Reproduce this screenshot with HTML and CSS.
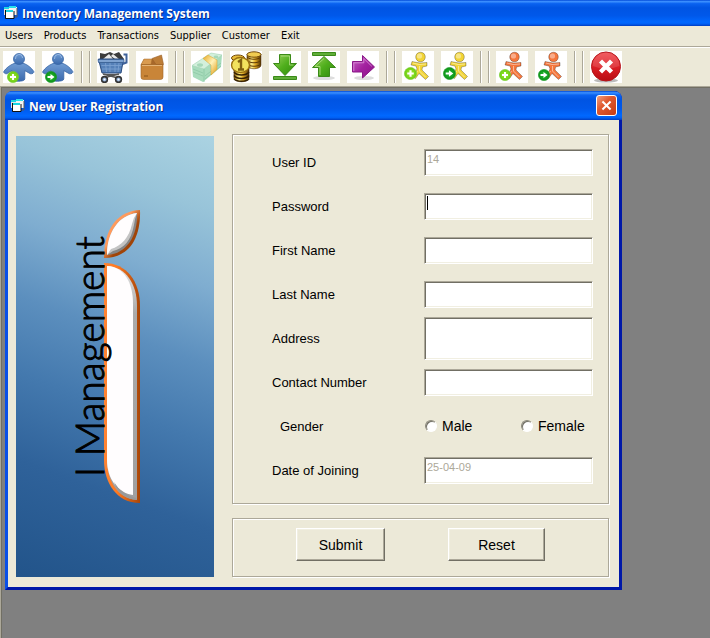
FILE: index.html
```html
<!DOCTYPE html>
<html lang="en">
<head>
<meta charset="utf-8">
<title>Inventory Management System</title>
<link rel="stylesheet" href="styles.css">
</head>
<body>
<svg class="defs" aria-hidden="true">
  <defs>
    <linearGradient id="g-blue" x1="0" y1="0" x2="0" y2="1"><stop offset="0" stop-color="#6f9bd2"/><stop offset="1" stop-color="#3a69ad"/></linearGradient>
    <linearGradient id="g-green" x1="0" y1="0" x2="1" y2="1"><stop offset="0" stop-color="#9ad25c"/><stop offset=".5" stop-color="#4fae1c"/><stop offset="1" stop-color="#2f8a0c"/></linearGradient>
    <linearGradient id="g-purple" x1="0" y1="0" x2="1" y2="1"><stop offset="0" stop-color="#c868c4"/><stop offset=".5" stop-color="#a3219f"/><stop offset="1" stop-color="#8a1088"/></linearGradient>
    <linearGradient id="g-gold" x1="0" y1="0" x2="1" y2="0"><stop offset="0" stop-color="#8a5a08"/><stop offset=".35" stop-color="#fff08a"/><stop offset=".6" stop-color="#e0a820"/><stop offset="1" stop-color="#4a2c04"/></linearGradient>
    <linearGradient id="g-red" x1="0" y1="0" x2="0" y2="1"><stop offset="0" stop-color="#f0454a"/><stop offset=".5" stop-color="#dc1f26"/><stop offset="1" stop-color="#b80c12"/></linearGradient>
    <linearGradient id="g-band" x1="0" y1="0" x2="1" y2="1"><stop offset="0" stop-color="#e8a820"/><stop offset=".5" stop-color="#fff2b8"/><stop offset="1" stop-color="#e09a10"/></linearGradient>
    <radialGradient id="g-lime"><stop offset="0" stop-color="#a8ec30"/><stop offset="1" stop-color="#68cc14"/></radialGradient>
    <radialGradient id="g-go"><stop offset="0" stop-color="#28c034"/><stop offset="1" stop-color="#0c9018"/></radialGradient>
    <symbol id="app" viewBox="0 0 16 16">
      <path d="M1 3h8v7H1z" fill="#e4e4e4"/><path d="M1 2h8v2H1z" fill="#20d4e4"/>
      <path d="M6 2h8v8H6z" fill="#f4f4f4"/><path d="M6 1h7v2H6z" fill="#28e0ec"/><path d="M14 3v9h-3" fill="none" stroke="#5a5a5a"/>
      <path d="M3 6h8v7H3z" fill="#fff"/><path d="M3 5h7v2H3z" fill="#18d4e4"/><path d="M2.500 5v8.500h8.500V6" fill="none" stroke="#111"/>
    </symbol>
    <symbol id="plus" viewBox="0 0 12 12"><circle cx="6" cy="6" r="5.600" fill="url(#g-lime)" stroke="#79cf2e" stroke-width=".6"/><path d="M6 3v6M3 6h6" stroke="#fff" stroke-width="2"/></symbol>
    <symbol id="go" viewBox="0 0 12 12"><circle cx="6" cy="6" r="5.600" fill="url(#g-go)" stroke="#1a9c24" stroke-width=".6"/><path d="M2.500 5h3V3L9.500 6 5.500 9V7h-3z" fill="#fff"/></symbol>
    <symbol id="person" viewBox="0 0 32 32">
      <path d="M11 12.500C7 14 3 17 .8 20.500c-.5 1.500 1.500 2.500 3 2.200l5-3V28c0 3 13 3 13 0v-8.300l5.500 3c2 .4 4-.8 3.500-2.200C28.500 17 25 14 21 12.500z" fill="url(#g-blue)" stroke="#3766a6" stroke-width=".8"/>
      <circle cx="16" cy="8" r="5.500" fill="url(#g-blue)" stroke="#3766a6" stroke-width=".8"/>
      <path d="M12.500 8a3.500 4 0 0 1 7-1" fill="none" stroke="#a5c3e8" stroke-width=".8"/>
    </symbol>
    <symbol id="runner" viewBox="0 0 32 32">
      <path d="M10 10.500l8 1.500 7-.5v3.500l-4.500 1-.5 3 6.500 6.500-3 3-6.500-6-3.500 5-2.500-1.500 4-8-1-3-5-1z" fill="currentColor" stroke="#0004" stroke-linejoin="round"/>
      <path d="M11 12l6 1.500 7-.500M17.500 15v5l6 6M15.500 20l-3 5" fill="none" stroke="#fff7"/>
      <circle cx="18.500" cy="6" r="4.800" fill="currentColor" stroke="#0004"/>
      <circle cx="17.500" cy="5" r="2.600" fill="#fff6"/>
    </symbol>
  </defs>
</svg>

<header class="titlebar">
  <svg class="appicon"><use href="#app"/></svg>
  <h1 class="caption">Inventory Management System</h1>
</header>

<nav class="menu">
  <a href="#users">Users</a>
  <a href="#products">Products</a>
  <a href="#transactions">Transactions</a>
  <a href="#supplier">Supplier</a>
  <a href="#customer">Customer</a>
  <a href="#exit">Exit</a>
</nav>

<div class="toolbar" role="toolbar">
  <button class="tool" type="button" aria-label="Add user"><svg viewBox="0 0 32 32"><use href="#person"/><use href="#plus" x="4" y="20" width="12" height="12"/></svg></button>
  <button class="tool" type="button" aria-label="Go to users"><svg viewBox="0 0 32 32"><use href="#person"/><use href="#go" x="3" y="20" width="12" height="12"/></svg></button>
  <span class="divider"></span>
  <button class="tool" type="button" aria-label="Products"><svg viewBox="0 0 32 32">
    <path d="M3 8V2l5 1 5-2 4 2 5-2 5 7z" fill="#3c3c3c"/><path d="M6 8l6-5 4 5zM16 3l6 5h-4l-4-3z" fill="#e8e8e8"/>
    <path d="M1.500 8h25l-2.500 14H5z" fill="#5580b8" stroke="#27497c" stroke-linejoin="round"/><path d="M1 8.500h26v3H1.500z" fill="#7ea2d0" stroke="#2f5488" stroke-width=".7"/>
    <path d="M4.500 14.500h20M5 18h18.500M8.500 12l1 9M13 12v9M18 12v9M22 12l-1 9" stroke="#7fa3d2" stroke-width=".8"/>
    <path d="M25.500 13l4-1.500V3.500h-3" fill="none" stroke="#3f629a" stroke-width="2"/>
    <path d="M6 23l15 4M22 23L8 26.500M9 24h12" stroke="#555" stroke-width="1.800"/>
    <circle cx="7.500" cy="28.500" r="2.900" fill="#89a9d3" stroke="#333" stroke-width="1.600"/><circle cx="21.500" cy="28.500" r="2.900" fill="#89a9d3" stroke="#333" stroke-width="1.600"/><circle cx="7.500" cy="28.500" r="1" fill="#fff"/><circle cx="21.500" cy="28.500" r="1" fill="#fff"/>
  </svg></button>
  <button class="tool" type="button" aria-label="Stock"><svg viewBox="0 0 32 32">
    <path d="M8 8h10l8 1 1 5H5z" fill="#a8682a"/>
    <path d="M5 13.500L8 8h8l-1 5.500z" fill="#d99b50" stroke="#a56a28" stroke-width=".5"/>
    <path d="M5 13.500h22V26q0 2.500-2.500 2.500h-17Q5 28.500 5 26z" fill="#c98538" stroke="#a0662a" stroke-width=".6"/>
    <path d="M16 7.500L25.500 4 27.500 13.500H20z" fill="#bd7d36" stroke="#9a6026" stroke-width=".6"/>
    <path d="M6 14.500h20" stroke="#e6b577"/><path d="M8 25h4" stroke="#9b6222" stroke-width="1.400"/>
  </svg></button>
  <span class="divider"></span>
  <button class="tool" type="button" aria-label="Cash"><svg viewBox="0 0 32 32">
    <path d="M1 15L20 3l11 1-1 12-18 15L2 26z" fill="#a8dcbc"/><path d="M1 14.500L20 2l11 2-18 14z" fill="#d3f0dc" stroke="#a5d3b5" stroke-width=".6"/><path d="M13 18v13M2 18l10 4M2 21l10 4M14 25l16-13M14 28l16-13" stroke="#8cc8a4" stroke-width=".8"/>
    <ellipse cx="9" cy="14" rx="3" ry="1.800" fill="#a6d8b8"/><ellipse cx="25" cy="6" rx="2.400" ry="1.400" fill="#a6d8b8"/>
    <path d="M12 7.500l5-3.500L26 9v9.500L20 24V14z" fill="url(#g-band)" stroke="#d8a22c" stroke-width=".5"/>
  </svg></button>
  <button class="tool" type="button" aria-label="Coins"><svg viewBox="0 0 32 32">
    <path d="M17 3v11c0 5 14 5 14 0V3z" fill="url(#g-gold)" stroke="#553505" stroke-width=".6"/><path d="M17 6c3 3 11 3 14 0M17 9.500c3 3 11 3 14 0M17 13c3 3 11 3 14 0" fill="none" stroke="#5e3b06"/><ellipse cx="24" cy="3.500" rx="7" ry="2.700" fill="#f0cc50" stroke="#70480a"/>
    <ellipse cx="8" cy="7" rx="6.500" ry="3" fill="#e8bd3a" stroke="#70480a"/>
    <path d="M4 16v11c0 5 15 5 15 0V16z" fill="url(#g-gold)" stroke="#3d2402" stroke-width=".6"/><path d="M4 21c3 4 12 4 15 0M4 24.500c3 4 12 4 15 0M4 28c3 3 12 3 15 0" fill="none" stroke="#352002" stroke-width="1.400"/>
    <ellipse cx="10.500" cy="14" rx="9" ry="7.500" fill="#f2e25e" stroke="#9a7010" stroke-width="1.400"/><path d="M8 11l3-2v9M8 18.500h6" fill="none" stroke="#806010" stroke-width="2.400"/>
  </svg></button>
  <button class="tool" type="button" aria-label="Receive"><svg viewBox="0 0 32 32"><path d="M10.500 3.500h11v9h6L16 24.500 4.500 12.500h6z" fill="url(#g-green)" stroke="#3b8a18"/><path d="M12 5h8.500v9h4" fill="none" stroke="#b4e088" stroke-width=".8"/><path d="M4.500 25.500h23v3h-23z" fill="#5fae38" stroke="#3b8a18"/></svg></button>
  <button class="tool" type="button" aria-label="Send"><svg viewBox="0 0 32 32"><ellipse cx="16" cy="27" rx="11" ry="2" fill="#ddd"/><path d="M4.500 1.500h23v3h-23z" fill="#5fae38" stroke="#3b8a18"/><path d="M16 5.500L27.500 16.500h-6v9h-11v-9h-6z" fill="url(#g-green)" stroke="#3b8a18"/><path d="M16 7.500l-9 8h5v8.500" fill="none" stroke="#b4e088" stroke-width=".8"/></svg></button>
  <button class="tool" type="button" aria-label="Next"><svg viewBox="0 0 32 32"><ellipse cx="17" cy="27" rx="10" ry="2" fill="#ddd"/><path d="M5.500 10.500h10V4.500L27.500 16 15.500 27v-6h-10z" fill="url(#g-purple)" stroke="#8a1888"/><path d="M6.800 20v-8.200h10V7.500l8 7.800" fill="none" stroke="#dc94da" stroke-width=".8"/></svg></button>
  <span class="divider"></span>
  <button class="tool yellow" type="button" aria-label="Add supplier"><svg viewBox="0 0 32 32"><use href="#runner"/><use href="#plus" x="2" y="16" width="13" height="13"/></svg></button>
  <button class="tool yellow" type="button" aria-label="Go to suppliers"><svg viewBox="0 0 32 32"><use href="#runner"/><use href="#go" x="2" y="16" width="13" height="13"/></svg></button>
  <span class="divider"></span>
  <button class="tool orange" type="button" aria-label="Add customer"><svg viewBox="0 0 32 32"><use href="#runner"/><use href="#plus" x="3" y="18" width="12" height="12"/></svg></button>
  <button class="tool orange" type="button" aria-label="Go to customers"><svg viewBox="0 0 32 32"><use href="#runner"/><use href="#go" x="3" y="18" width="12" height="12"/></svg></button>
  <span class="divider"></span>
  <button class="tool" type="button" aria-label="Exit"><svg viewBox="0 0 32 32"><ellipse cx="16" cy="29.500" rx="12" ry="2" fill="#bbb"/><circle cx="16" cy="15.500" r="14.500" fill="url(#g-red)" stroke="#b5161b"/><path d="M2.500 15a13.500 13.500 0 0 1 27 0q-13 5-27 0z" fill="#fff2"/><path d="M10.500 10l11 11M21.500 10l-11 11" stroke="#fff" stroke-width="4.400"/></svg></button>
</div>

<main class="desktop">
  <section class="window" aria-labelledby="reg-title">
    <div class="window-bar">
      <svg class="appicon"><use href="#app"/></svg>
      <h2 class="caption" id="reg-title">New User Registration</h2>
      <button class="close" type="button" aria-label="Close"><svg viewBox="0 0 21 21"><path d="M6 6l9 9M15 6l-9 9" stroke="#fff" stroke-width="2.200"/></svg></button>
    </div>
    <form class="window-body">
      <svg class="banner" viewBox="0 0 198 441">
        <defs>
          <linearGradient id="b-edge" x1="0" y1="0" x2="1" y2="0"><stop offset="0" stop-color="#ff8434"/><stop offset=".35" stop-color="#ff7a22"/><stop offset="1" stop-color="#a84608"/></linearGradient>
          <linearGradient id="b-leaf" x1="0" y1="0" x2="1" y2="1"><stop offset=".4" stop-color="#ff9a5c"/><stop offset=".6" stop-color="#a04408"/></linearGradient>
          <linearGradient id="b-shade" x1="0" y1="0" x2="0" y2="1"><stop offset="0" stop-color="#e4e4e4"/><stop offset=".2" stop-color="#ababab"/><stop offset="1" stop-color="#a0a0a0"/></linearGradient>
        </defs>
        <path d="M88 122C88 92 102 75 124 74C125 101 114 122 88 122z" fill="url(#b-leaf)"/>
        <path d="M91 119C91 96 103 79 121 77C122 99 111 118 91 119z" fill="#858585"/>
        <path d="M91 119C91 96 103 79 121 77Q119 82 118 89C115 105 108 112 97 115z" fill="#c4c4c4"/>
        <path d="M91 119C91 96 103 79 121 77Q117 82 116 88C113 102 105 110 95 113z" fill="#fffdfe"/>
        <path d="M88 127C111 127 124 146 124 170V367C100 367 88 346 88 324z" fill="url(#b-edge)"/>
        <path d="M91 130C110 131 121 148 121 170V364C102 363 91 345 91 324z" fill="url(#b-shade)"/>
        <path d="M91 130C108 131 117 146 117 168V359C102 357 91 343 91 324z" fill="#fffdfe"/>
        <path d="M98 346Q105 358 120 362L121 364Q104 363 98 346z" fill="#999"/>
        <text class="banner-text" transform="translate(88 341) rotate(-90)">I Management</text>
      </svg>
      <div class="panels">
        <div class="panel fields">
          <div class="row"><label for="uid">User ID</label><input class="box" id="uid" type="text" value="14" disabled></div>
          <div class="row"><label for="pwd">Password</label><input class="box current" id="pwd" type="password"></div>
          <div class="row"><label for="first">First Name</label><input class="box" id="first" type="text"></div>
          <div class="row"><label for="last">Last Name</label><input class="box" id="last" type="text"></div>
          <div class="row"><label for="addr">Address</label><textarea class="box tall" id="addr"></textarea></div>
          <div class="row"><label for="phone">Contact Number</label><input class="box" id="phone" type="text"></div>
          <div class="row" role="radiogroup" aria-labelledby="gender"><span class="indent" id="gender">Gender</span>
            <div class="options">
              <label class="option"><input class="radio" type="radio" name="gender">Male</label>
              <label class="option"><input class="radio" type="radio" name="gender">Female</label>
            </div>
          </div>
          <div class="row"><label for="doj">Date of Joining</label><input class="box" id="doj" type="text" value="25-04-09" disabled></div>
        </div>
        <div class="panel actions">
          <button class="push" type="submit">Submit</button>
          <button class="push wide" type="reset">Reset</button>
        </div>
      </div>
    </form>
  </section>
</main>
</body>
</html>
```

FILE: styles.css
```css
* { box-sizing: border-box; }

body {
  margin: 0;
  min-height: 100vh;
  display: flex;
  flex-direction: column;
  background: #ece9d8;
  color: #000;
  font-family: "Liberation Sans", Arial, sans-serif;
  font-size: 14px;
}

button, input, textarea { font: inherit; color: inherit; }

.defs { position: absolute; width: 0; height: 0; }

.titlebar,
.window-bar {
  display: flex;
  align-items: center;
  gap: 3px;
  background: linear-gradient(#0048d8 0, #3c90ff 6%, #0a62f0 14%, #0054e3 30%, #0058ea 60%, #0068ff 85%, #0060f4 92%, #003cc0 100%);
}

.titlebar { height: 26px; padding: 0 3px; }

.appicon { width: 16px; height: 16px; }

.caption {
  margin: 0;
  padding-top: 2px;
  flex: 1;
  color: #fff;
  font: bold 12px/18px "Open Sans", "Noto Sans", sans-serif;
  text-shadow: 1px 1px 0 #0a2a80;
}

.menu {
  display: flex;
  gap: 11px;
  height: 20px;
  padding: 0 5px;
  font: 11px/19px "DejaVu Sans Condensed", "DejaVu Sans", sans-serif;
}

.menu a { color: #000; text-decoration: none; }

.toolbar {
  display: flex;
  gap: 7px;
  padding: 4px 3px 3px;
  border-top: 1px solid #aca899;
  box-shadow: inset 0 1px 0 #fff;
}

.tool {
  flex: none;
  width: 32px;
  height: 32px;
  padding: 0;
  border: 0;
  background: #fff;
}

.tool svg { display: block; width: 32px; height: 32px; }
.yellow { color: #f2d436; }
.orange { color: #f5763c; }

.divider {
  width: 9px;
  border: solid #aca899;
  border-width: 0 1px;
  box-shadow: 1px 0 0 #fff, inset 1px 0 0 #fff;
}

.desktop {
  flex: 1;
  padding: 4px;
  background: #808080;
  border: solid #aca899;
  border-width: 1px 0 0 1px;
  box-shadow: inset 1px 1px 0 #716f64;
}

.window {
  max-width: 617px;
  border: solid;
  border-width: 0 3px 3px;
  border-color: #0a3fdc #0018a8 #0018a8 #0a50e8;
  border-radius: 8px 8px 0 0;
  background: #0054e3;
}

.window-bar {
  height: 29px;
  margin: 0 -3px;
  padding: 0 5px;
  border-radius: 8px 8px 0 0;
}

.close {
  width: 21px;
  height: 21px;
  padding: 0;
  border: 1px solid #fff;
  border-radius: 3px;
  background: linear-gradient(135deg, #f0a080, #e05a30 40%, #c83c14);
}

.close svg { display: block; width: 19px; height: 19px; }

.window-body {
  display: flex;
  gap: 18px;
  padding: 14px 10px 10px 8px;
  background: #ece9d8;
}

.banner {
  flex: none;
  width: 198px;
  margin-top: 2px;
  background: linear-gradient(200deg, #abd3e2 0%, #98c4d9 15%, #7fadd0 30%, #5c8fbe 45%, #4479ae 60%, #2f629a 77%, #22548a 100%);
}

.banner-text {
  font: 300 39px Lato, sans-serif;
  stroke: #000;
  stroke-width: 1px;
}

.panels {
  flex: 1;
  display: flex;
  flex-direction: column;
  gap: 14px;
}

.panel {
  border: 1px solid #aca899;
  box-shadow: 1px 1px 0 #fff, inset 1px 1px 0 #fff;
}

.fields { padding: 5px 15px 11px 39px; font-size: 13px; }

.row {
  display: grid;
  grid-template-columns: 152px 1fr;
  align-items: center;
  height: 44px;
}

.indent { padding-left: 8px; }

.box {
  width: 100%;
  height: 27px;
  padding: 1px 2px 7px;
  border: 1px solid;
  border-color: #aca899 #fff #fff #aca899;
  border-radius: 0;
  outline: 0;
  background: #fff;
  box-shadow: inset 1px 1px 0 #716f64, inset -1px -1px 0 #f1efe2;
  font-size: 11px;
}

.box:disabled { color: #aca899; }
.tall { height: 43px; resize: none; display: block; }

.current {
  background: linear-gradient(#000, #000) 2px 2px / 1px 14px no-repeat #fff;
}

.options { display: grid; grid-template-columns: 96px 1fr; font-size: 14px; }

.option { display: flex; align-items: center; gap: 5px; }

.radio {
  appearance: none;
  width: 12px;
  height: 12px;
  margin: 0 0 0 1px;
  border: 1px solid;
  border-color: #8b887a #fff #fff #8b887a;
  border-radius: 50%;
  background: #fff;
  box-shadow: inset 1px 1px 0 #716f64;
}

.actions {
  display: flex;
  gap: 63px;
  padding: 9px 63px 15px;
}

.push {
  width: 89px;
  height: 33px;
  padding: 0;
  border: 1px solid;
  border-color: #fff #716f64 #716f64 #fff;
  background: #ece9d8;
  box-shadow: inset -1px -1px 0 #aca899, inset 1px 1px 0 #f1efe2;
}

.wide { width: 97px; }
```
